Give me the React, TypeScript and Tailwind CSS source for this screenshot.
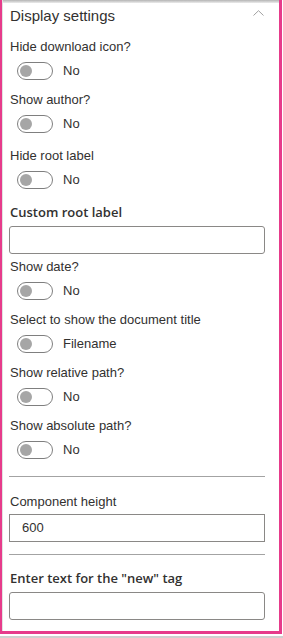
import React from 'react';

const font = "font-['Liberation_Sans',Arial,sans-serif]";

function Toggle({ text }: { text: string }) {
  return (
    <div className="ml-[8px] mt-[6px] flex h-[18px] items-center">
      <div className="flex h-[18px] w-[36px] items-center rounded-full border border-[#7f7f7f] bg-white pl-[2px]">
        <div className="h-[12px] w-[12px] rounded-full bg-[#a6a6a6]" />
      </div>
      <span className="ml-[10px] text-[13px] leading-[18px] text-[#323130]">{text}</span>
    </div>
  );
}

function Label({ children, mt, bold }: { children: React.ReactNode; mt: string; bold?: boolean }) {
  return (
    <div
      className={`${mt} h-[18px] pl-[1px] text-[13px] leading-[18px] text-[#323130] ${
        bold ? "font-['Open_Sans',sans-serif] font-semibold text-[12.5px]" : ''
      }`}
    >
      {children}
    </div>
  );
}

function Field({ value, square }: { value?: string; square?: boolean }) {
  return (
    <div
      className={`flex h-[28px] w-[256px] items-center border border-[#8a8886] bg-white pl-[12px] text-[13px] text-[#323130] ${
        square ? '' : 'rounded-[3px]'
      }`}
    >
      {value}
    </div>
  );
}

export default function App() {
  return (
    <div className={`h-[638px] w-[283px] bg-white ${font}`}>
      <div className="flex h-[634px] w-[282px] border-b-[3px] border-l-2 border-r-[3px] border-[#e63b8b]">
        <div className="w-[2px] bg-[#e2e2e2]" />
        <div className="flex flex-1 flex-col">
          <div className="h-[3px] bg-gradient-to-b from-[#b4b4b4] to-[#ececec]" />
          <div className="flex flex-col pl-[6px] pr-[14px]">
            <div className="mt-[3px] flex h-[20px] items-center justify-between pl-[1px]">
              <span className="text-[15px] leading-[20px] text-[#323130]">Display settings</span>
              <svg width="11" height="6" viewBox="0 0 11 6" className="mr-[1px] -mt-[6px]">
                <path d="M0.5 5.5 L5.5 0.7 L10.5 5.5" fill="none" stroke="#a0a0a0" strokeWidth="1" />
              </svg>
            </div>

            <Label mt="mt-[12px]">Hide download icon?</Label>
            <Toggle text="No" />

            <Label mt="mt-[11px]">Show author?</Label>
            <Toggle text="No" />

            <Label mt="mt-[14px]">Hide root label</Label>
            <Toggle text="No" />

            <Label mt="mt-[14px]" bold>
              Custom root label
            </Label>
            <div className="mt-[5px]">
              <Field />
            </div>

            <Label mt="mt-[4px]">Show date?</Label>
            <Toggle text="No" />

            <Label mt="mt-[11px]">Select to show the document title</Label>
            <Toggle text="Filename" />

            <Label mt="mt-[11px]">Show relative path?</Label>
            <Toggle text="No" />

            <Label mt="mt-[11px]">Show absolute path?</Label>
            <Toggle text="No" />

            <div className="mt-[17px] h-px w-[256px] bg-[#a3a3a3]" />

            <Label mt="mt-[16px]">Component height</Label>
            <div className="mt-[3px]">
              <Field value="600" square />
            </div>

            <div className="mt-[12px] h-px w-[256px] bg-[#a3a3a3]" />

            <Label mt="mt-[14px]" bold>
              Enter text for the "new" tag
            </Label>
            <div className="mt-[5px]">
              <Field />
            </div>
          </div>
        </div>
      </div>
      <div className="h-[2px] bg-white" />
      <div className="h-[2px] bg-[#cfcfcf]" />
    </div>
  );
}
